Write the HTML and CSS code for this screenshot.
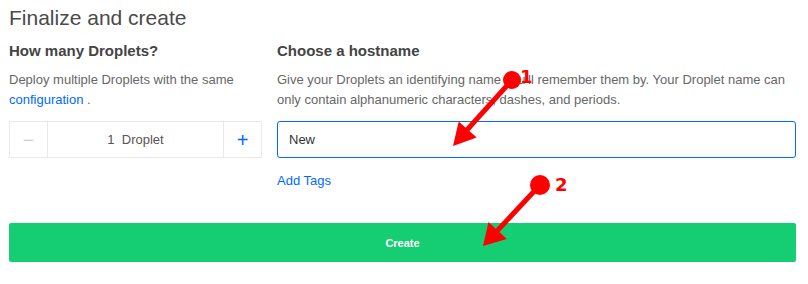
FILE: index.html
```html
<!DOCTYPE html>
<html lang="en">
<head>
    <meta charset="UTF-8">
    <title>Finalize and create</title>
    <link rel="stylesheet" href="styles.css">
</head>
<body>
  <main class="finalize">
    <h1 class="page-title">Finalize and create</h1>

    <section class="columns">
      <div class="col">
        <h3 class="col-title">How many Droplets?</h3>
        <p class="col-desc">Deploy multiple Droplets with the same <a href="#">configuration</a> .</p>
        <div class="stepper">
          <button class="step-btn minus">&minus;</button>
          <div class="step-value">1&nbsp; Droplet</div>
          <button class="step-btn plus">+</button>
        </div>
      </div>

      <div class="col">
        <h3 class="col-title">Choose a hostname</h3>
        <p class="col-desc">Give your Droplets an identifying name you'll remember them by. Your Droplet name can only contain alphanumeric characters, dashes, and periods.</p>
        <div class="host-input">New</div>
        <a class="add-tags" href="#">Add Tags</a>
      </div>
    </section>

    <button class="create-btn">Create</button>
  </main>

  <!-- annotation arrows -->
  <svg class="marks" width="808" height="284" viewBox="0 0 808 284">
    <line x1="512" y1="80" x2="466" y2="131" stroke="#ff0000" stroke-width="5"/>
    <circle cx="512" cy="80" r="9" fill="#ff0000"/>
    <polygon points="453,146 476.7,137.6 458.7,121.6" fill="#ff0000"/>
    <text x="520" y="83" class="mark-num">1</text>

    <line x1="540" y1="185" x2="497" y2="231" stroke="#ff0000" stroke-width="5"/>
    <circle cx="540" cy="185" r="10" fill="#ff0000"/>
    <polygon points="483,246 506.8,239 488.5,222" fill="#ff0000"/>
    <text x="555" y="191" class="mark-num">2</text>
  </svg>
</body>
</html>
```

FILE: styles.css
```css
:root {
  --clr-text: #444;
  --clr-muted: #676767;
  --clr-link: #0069ff;
  --clr-line: #e9e9e9;
  --clr-green: #15cd72;
}
* { margin: 0; padding: 0; box-sizing: border-box; }
body {
  font-family: 'Liberation Sans', Arial, sans-serif;
  color: var(--clr-text);
  background: #fff;
  position: relative;
}
.finalize {
  padding: 4px 12px 0 9px;
}
.page-title {
  font-size: 21px;
  font-weight: 400;
  line-height: 28px;
  color: #4a4a4a;
}
.columns {
  display: grid;
  grid-template-columns: 253px 1fr;
  gap: 15px;
  margin-top: 9px;
}
.col-title {
  font-size: 15px;
  font-weight: 700;
  line-height: 20px;
  color: #444;
}
.col-desc {
  font-size: 13px;
  line-height: 20px;
  color: var(--clr-muted);
  margin-top: 9px;
  min-height: 40px;
}
.col-desc a {
  color: var(--clr-link);
  text-decoration: none;
}
.stepper {
  display: flex;
  height: 37px;
  margin-top: 11px;
  border: 1px solid var(--clr-line);
}
.step-btn {
  width: 38px;
  border: none;
  background: #fff;
  font-family: inherit;
  font-size: 20px;
  line-height: 1;
}
.step-btn.minus { color: #d0d0d0; border-right: 1px solid var(--clr-line); }
.step-btn.plus { color: var(--clr-link); border-left: 1px solid var(--clr-line); }
.step-value {
  flex: 1;
  display: flex;
  align-items: center;
  justify-content: center;
  font-size: 13px;
  color: #555;
}
.host-input {
  height: 37px;
  margin-top: 11px;
  border: 1px solid var(--clr-link);
  border-radius: 3px;
  padding: 0 11px;
  display: flex;
  align-items: center;
  font-size: 13px;
  color: #333;
}
.add-tags {
  display: block;
  margin-top: 15px;
  font-size: 13px;
  color: var(--clr-link);
  text-decoration: none;
}
.create-btn {
  display: block;
  width: 100%;
  height: 39px;
  margin-top: 35px;
  border: none;
  border-radius: 2px;
  background: var(--clr-green);
  color: #fff;
  font-family: inherit;
  font-size: 11px;
  font-weight: 700;
}
.marks {
  position: absolute;
  left: 0;
  top: 0;
  pointer-events: none;
}
.mark-num {
  font-family: 'DejaVu Sans', sans-serif;
  font-weight: 700;
  font-size: 18px;
  fill: #ff0000;
}
```
